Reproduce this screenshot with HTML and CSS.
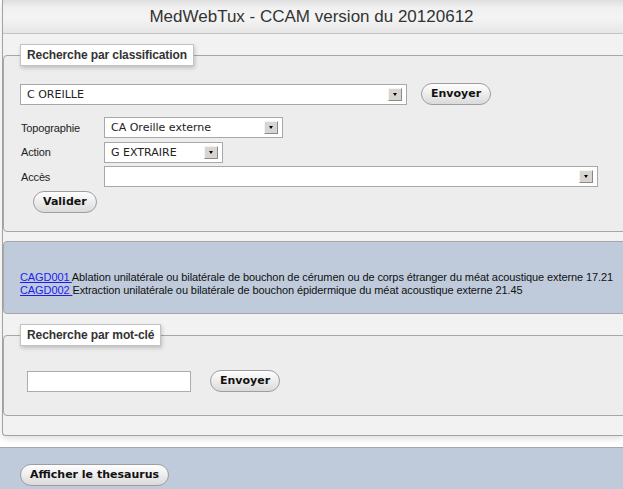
FILE: index.html
```html
<!DOCTYPE html>
<html lang="fr">
<head>
<meta charset="utf-8">
<title>MedWebTux - CCAM</title>
<link rel="stylesheet" href="styles.css">
</head>
<body>
<div class="page">
  <header class="top">
    <h1 class="title">MedWebTux - CCAM version du 20120612</h1>
  </header>
  <div class="main">
    <fieldset class="box box-class">
      <legend class="legend">Recherche par classification</legend>
      <div class="line">
        <div class="select sel-chapter"><span class="val">C OREILLE</span><span class="arrow"></span></div>
        <button class="btn">Envoyer</button>
      </div>
      <div class="form-grid">
        <span class="label">Topographie</span>
        <div class="select sel-topo"><span class="val">CA Oreille externe</span><span class="arrow"></span></div>
        <span class="label">Action</span>
        <div class="select sel-action"><span class="val">G EXTRAIRE</span><span class="arrow"></span></div>
        <span class="label">Accès</span>
        <div class="select sel-acces"><span class="val"></span><span class="arrow"></span></div>
      </div>
      <button class="btn btn-valider">Valider</button>
    </fieldset>

    <div class="results">
      <p class="res-line"><a href="#" class="code">CAGD001 </a>Ablation unilatérale ou bilatérale de bouchon de cérumen ou de corps étranger du méat acoustique externe 17.21</p>
      <p class="res-line"><a href="#" class="code">CAGD002 </a>Extraction unilatérale ou bilatérale de bouchon épidermique du méat acoustique externe 21.45</p>
    </div>

    <fieldset class="box box-key">
      <legend class="legend">Recherche par mot-clé</legend>
      <div class="line line-key">
        <input class="text-input" type="text">
        <button class="btn">Envoyer</button>
      </div>
    </fieldset>
  </div>
</div>
<footer class="foot">
  <button class="btn">Afficher le thesaurus</button>
</footer>
</body>
</html>
```

FILE: styles.css
```css
html, body {
  margin: 0;
  padding: 0;
  overflow: hidden;
  background: #ffffff;
  font-family: "Liberation Sans", Arial, sans-serif;
  font-size: 11px;
  color: #222;
}

.page {
  margin-left: 2px;
  border-left: 1px solid #a2a2a2;
  border-bottom: 1px solid #a2a2a2;
  border-bottom-left-radius: 4px;
  background: #f2f2f2;
  box-shadow: 0 3px 6px rgba(0, 0, 0, 0.12);
}

.top {
  height: 33px;
  border-bottom: 1px solid #c4c4c4;
  background: linear-gradient(to bottom, #dedede 0, #f0f0f0 22%, #f4f4f4 55%, #e6e6e6 100%);
  display: flex;
  align-items: center;
  justify-content: center;
}

.title {
  margin: 0 0 0 -3px;
  font-weight: normal;
  font-size: 17px;
  color: #333;
}

.main {
  padding: 10px 0 19px 0;
}

.box {
  margin: 0 -20px 0 0;
  padding: 17px 16px 18px 16px;
  border: 1px solid #a6a6a6;
  border-radius: 4px;
  background: #ededed;
  min-width: 0;
}

.legend {
  padding: 0 6px;
  height: 22px;
  box-sizing: border-box;
  line-height: 20px;
  border: 1px solid #c2c2c2;
  background: #fff;
  font-family: "Liberation Sans", Arial, sans-serif;
  font-weight: bold;
  font-size: 12px;
  letter-spacing: -0.1px;
  color: #333;
  box-shadow: 1px 2px 4px rgba(0, 0, 0, 0.2);
}

.line {
  display: flex;
  align-items: center;
  height: 22px;
  gap: 14px;
}

.select {
  box-sizing: border-box;
  height: 21px;
  background: #fff;
  border: 1px solid #a8a8a8;
  display: flex;
  align-items: center;
  justify-content: space-between;
  padding: 0 4px 0 6px;
  font-family: "DejaVu Sans", Verdana, sans-serif;
  font-size: 11px;
  color: #222;
}

.arrow {
  width: 14px;
  height: 13px;
  box-sizing: border-box;
  background: #d8d5d0;
  border: 1px solid;
  border-color: #f4f4f4 #8a8a8a #8a8a8a #f4f4f4;
  display: flex;
  align-items: center;
  justify-content: center;
}

.arrow::before {
  content: "";
  border-left: 2px solid transparent;
  border-right: 2px solid transparent;
  border-top: 3px solid #000;
}

.sel-chapter { width: 387px; }
.sel-topo { width: 179px; }
.sel-action { width: 119px; }
.sel-acces { width: 494px; }

.form-grid {
  display: grid;
  grid-template-columns: 84px auto;
  justify-content: start;
  align-items: center;
  row-gap: 3.5px;
  margin-top: 12px;
}

.label {
  padding-left: 1px;
  letter-spacing: -0.15px;
  color: #222;
}

.btn {
  box-sizing: border-box;
  height: 22px;
  padding: 0 9px;
  border: 1px solid #9e9e9e;
  border-radius: 11px;
  background: linear-gradient(to bottom, #fefefe 0, #efefef 45%, #dadada 100%);
  font-family: "DejaVu Sans", Verdana, sans-serif;
  font-weight: bold;
  font-size: 11px;
  color: #111;
  line-height: 20px;
}

.btn-valider {
  margin: 4px 0 0 13px;
  display: block;
}

.results {
  margin: 9px -20px 10px 0;
  padding: 29px 16px 16px 16px;
  border: 1px solid #a6a6a6;
  border-radius: 4px;
  background: #bfcbdb;
}

.res-line {
  margin: 0;
  line-height: 13px;
  font-size: 11px;
  letter-spacing: -0.1px;
  color: #111;
  white-space: nowrap;
}

.code {
  color: #1c1cf0;
  text-decoration: underline;
}

.box-key {
  padding: 24px 16px 23px 16px;
}

.line-key {
  gap: 19px;
}

.text-input {
  box-sizing: border-box;
  margin: 0 0 0 7px;
  width: 164px;
  height: 21px;
  border: 1px solid #acacac;
  background: #fff;
  padding: 0 4px;
}

.foot {
  margin-top: 11px;
  border-top: 1px solid #a8a8a8;
  background: #bfcbdb;
  height: 60px;
  padding: 16px 0 0 20px;
}
```
